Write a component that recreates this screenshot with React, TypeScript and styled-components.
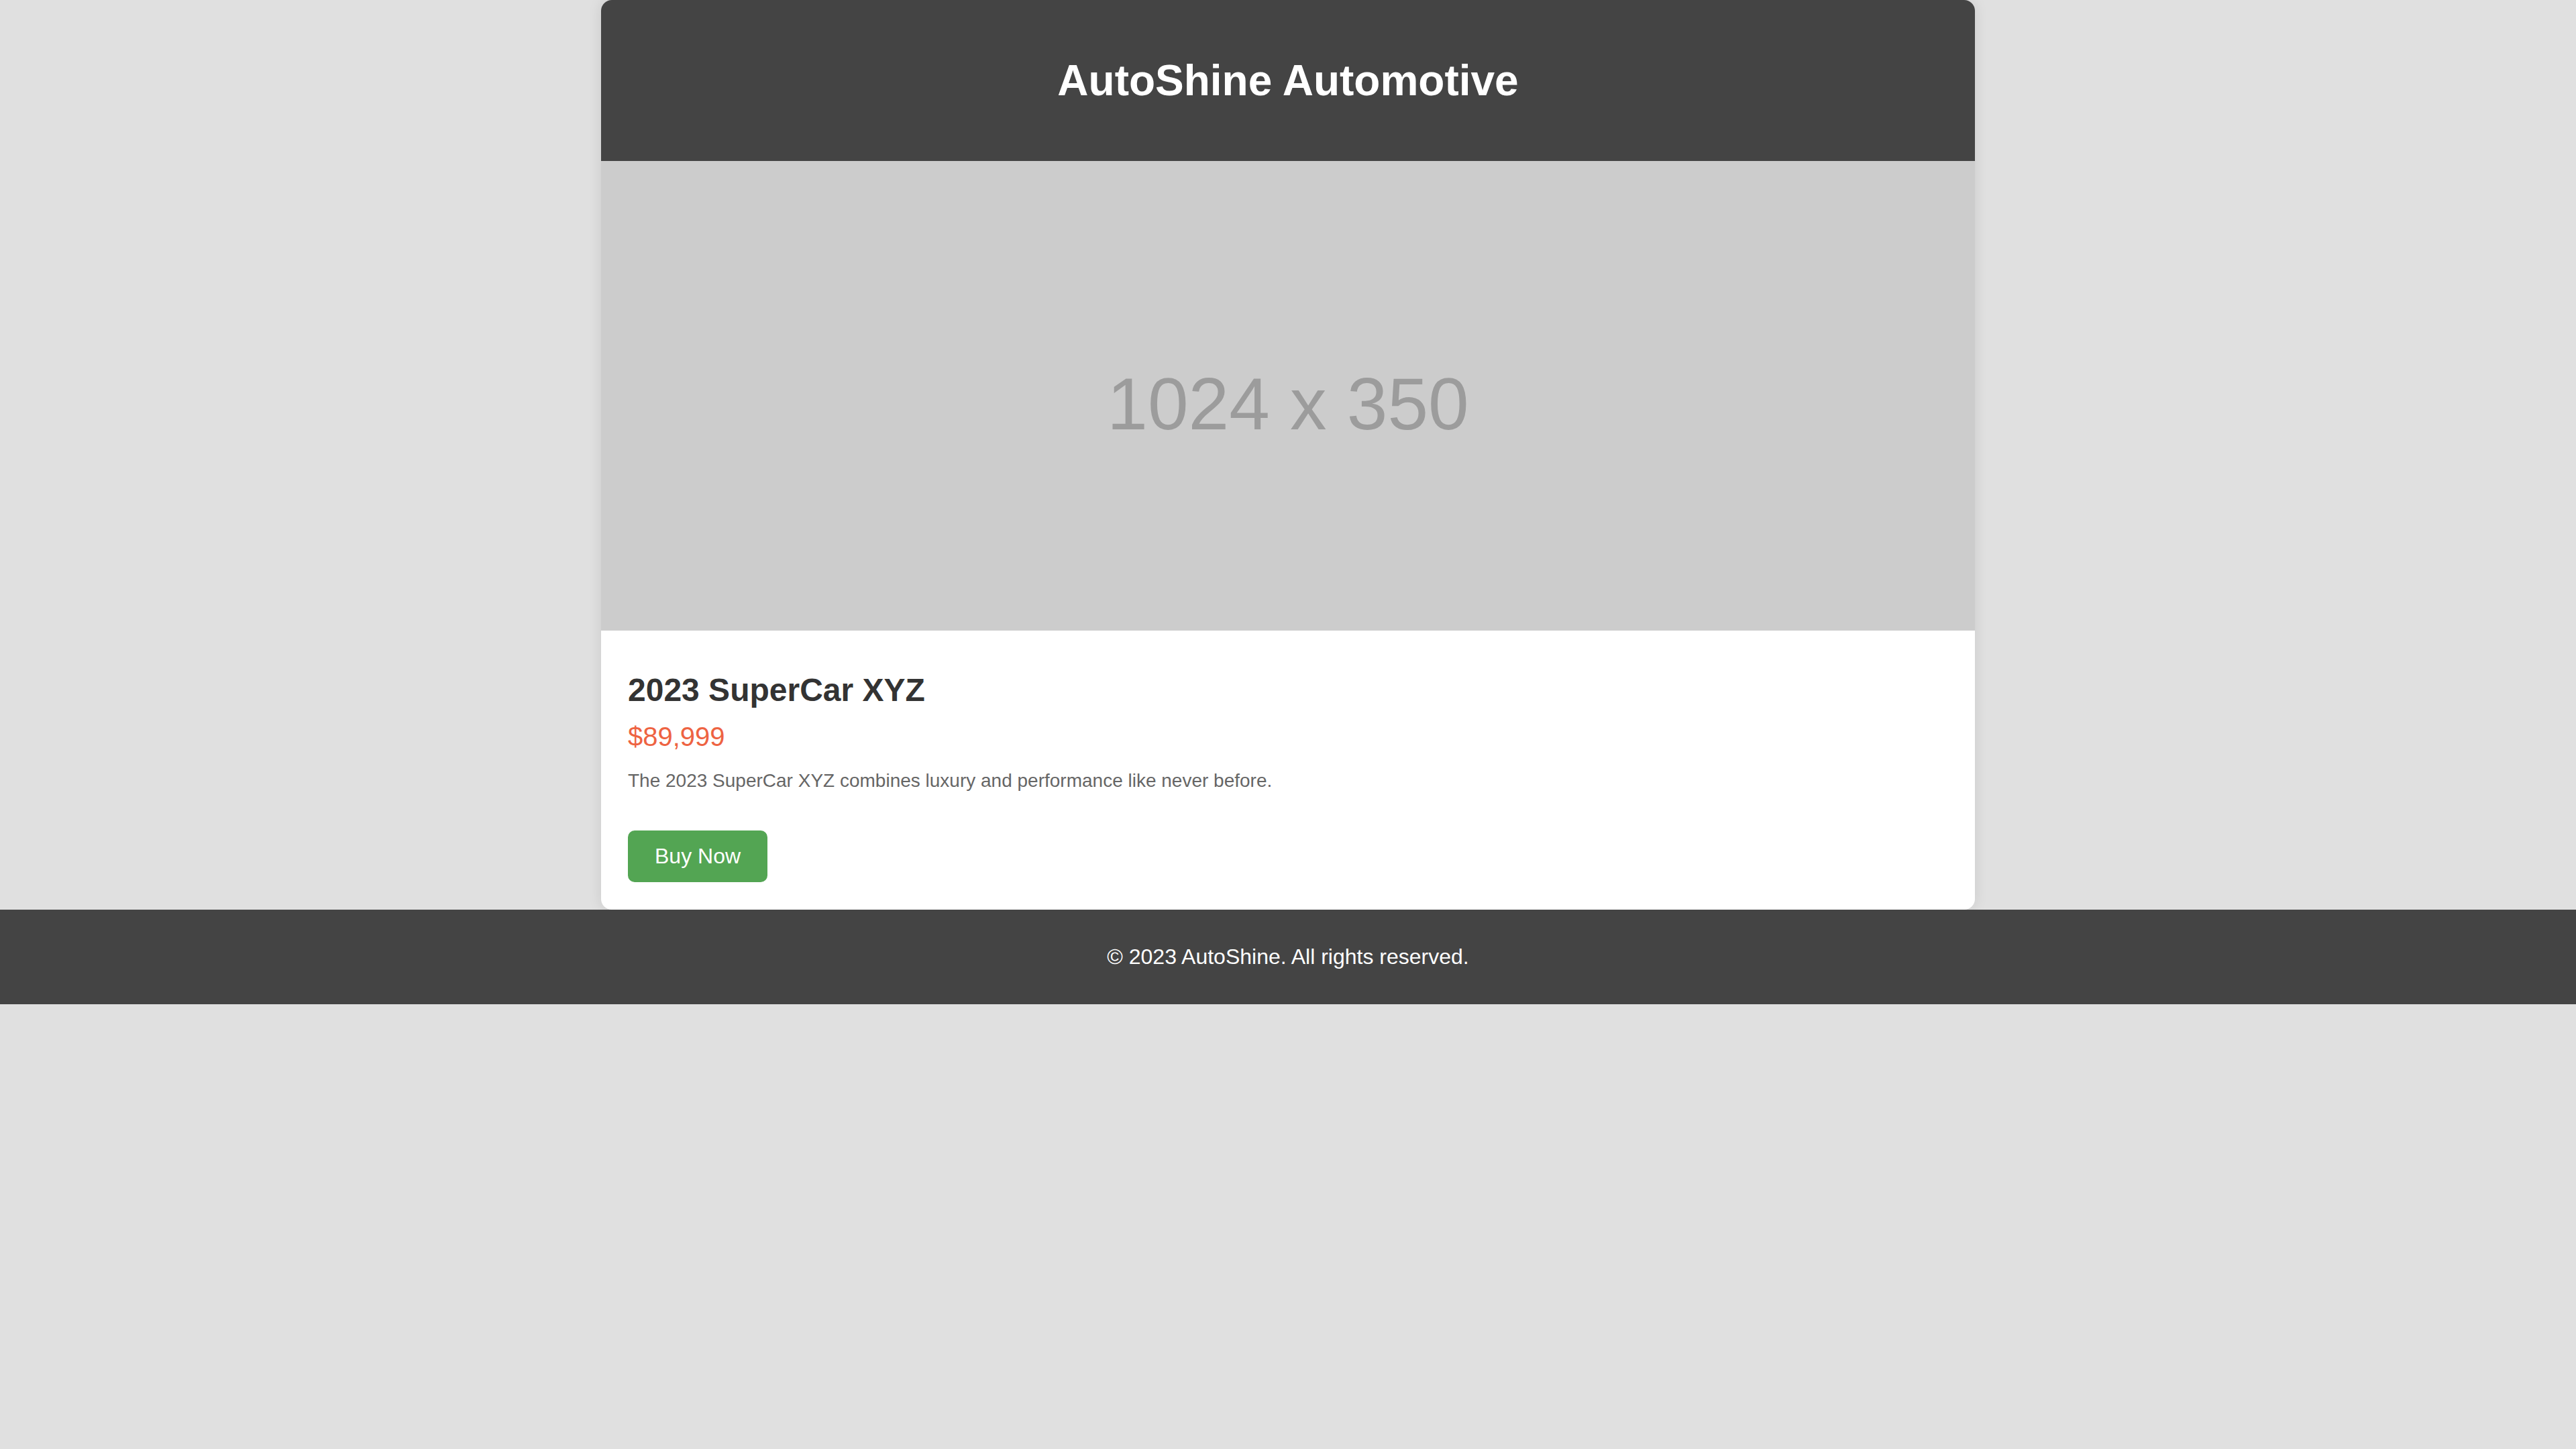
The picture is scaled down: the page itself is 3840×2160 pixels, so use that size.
import styled, { createGlobalStyle } from 'styled-components';

const GlobalStyle = createGlobalStyle`
  html, body {
    margin: 0;
    padding: 0;
    background-color: #e0e0e0;
    font-family: "Liberation Sans", Arial, sans-serif;
  }
`;

const Page = styled.div`
  display: flex;
  flex-direction: column;
  min-height: 2160px;
  background-color: #e0e0e0;
`;

const Card = styled.main`
  width: 2048px;
  margin: 0 auto;
  background-color: #ffffff;
  border-radius: 16px;
  overflow: hidden;
  box-shadow: 0 0 20px rgba(0, 0, 0, 0.1);
`;

const Header = styled.header`
  height: 240px;
  display: flex;
  align-items: center;
  justify-content: center;
  background-color: #444444;
`;

const Title = styled.h1`
  margin: 0;
  font-size: 64px;
  font-weight: bold;
  color: #ffffff;
`;

const Placeholder = styled.div`
  height: 700px;
  display: flex;
  align-items: center;
  justify-content: center;
  padding-top: 24px;
  box-sizing: border-box;
  background-color: #cccccc;
  color: #9c9c9c;
  font-size: 109px;
`;

const Details = styled.section`
  display: flex;
  flex-direction: column;
  align-items: flex-start;
  padding: 61px 40px 41px;
`;

const CarName = styled.h2`
  margin: 0 0 20px;
  font-size: 48px;
  font-weight: bold;
  color: #333333;
`;

const Price = styled.p`
  margin: 0 0 27px;
  font-size: 40px;
  color: #ee6342;
`;

const Description = styled.p`
  margin: 0 0 58px;
  font-size: 28px;
  color: #666666;
`;

const BuyButton = styled.button`
  padding: 20px 40px;
  border: none;
  border-radius: 10px;
  background-color: #53a553;
  color: #ffffff;
  font-family: inherit;
  font-size: 32px;
  cursor: pointer;
`;

const Footer = styled.footer`
  padding: 52px 0;
  background-color: #444444;
  color: #ffffff;
  font-size: 32px;
  text-align: center;
`;

const App: React.FC = () => {
  return (
    <Page>
      <GlobalStyle />
      <Card>
        <Header>
          <Title>AutoShine Automotive</Title>
        </Header>
        <Placeholder>1024 x 350</Placeholder>
        <Details>
          <CarName>2023 SuperCar XYZ</CarName>
          <Price>$89,999</Price>
          <Description>
            The 2023 SuperCar XYZ combines luxury and performance like never before.
          </Description>
          <BuyButton>Buy Now</BuyButton>
        </Details>
      </Card>
      <Footer>© 2023 AutoShine. All rights reserved.</Footer>
    </Page>
  );
};

export default App;
